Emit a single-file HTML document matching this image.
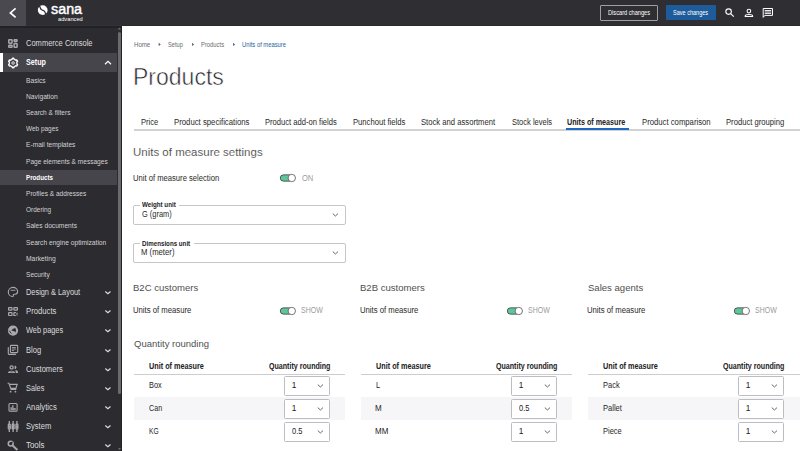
<!DOCTYPE html>
<html><head><meta charset="utf-8"><style>
html,body{margin:0;padding:0;}
body{width:800px;height:451px;overflow:hidden;position:relative;background:#fff;font-family:"Liberation Sans", sans-serif;}
.t{position:absolute;line-height:1;white-space:nowrap;transform-origin:0 0;}
svg{overflow:visible;}
</style></head><body>
<div style="position:absolute;left:0px;top:0px;width:800px;height:25.3px;background:#2f2e33;"></div>
<div style="position:absolute;left:0px;top:0px;width:26px;height:25.8px;background:#4a494f;"></div>
<div style="position:absolute;left:122px;top:25.3px;width:678px;height:0.5px;background:#29282c;"></div>
<svg style="position:absolute;left:0px;top:0px;" width="26" height="26" viewBox="0 0 26 26"><polyline points="15.6,8.4 10.4,12.9 15.6,17.4" fill="none" stroke="#fff" stroke-width="1.7"/></svg>
<svg style="position:absolute;left:0px;top:0px;" width="60" height="26" viewBox="0 0 60 26"><circle cx="42.7" cy="10.1" r="4.9" fill="#fff"/><path d="M39.3,5.6 C40.3,7.2 40.2,8.9 41.6,9.8 C42.6,10.4 43.6,10.4 44.3,11.1 C45.1,11.9 45.2,13 46,14.6" fill="none" stroke="#2f2e33" stroke-width="1.25"/></svg>
<div class="t" style="left:50.77px;top:1.70px;font-size:14.9px;color:#fff;transform:scaleX(0.9619);-webkit-text-stroke:0.45px #fff;">sana</div>
<div class="t" style="left:57.77px;top:15.81px;font-size:6.2px;color:#fff;transform:scaleX(0.9227);">advanced</div>
<div style="position:absolute;left:599.5px;top:5px;width:56.5px;height:13.5px;border:1px solid #a0a0a3;border-radius:1px;"></div>
<div class="t" style="left:608.05px;top:9.50px;font-size:6.27px;color:#fff;transform:scaleX(0.9017);">Discard changes</div>
<div style="position:absolute;left:665.5px;top:5.1px;width:50.6px;height:15.3px;background:#1e5b9a;border-radius:1px;"></div>
<div class="t" style="left:672.55px;top:9.50px;font-size:6.27px;color:#fff;transform:scaleX(0.8830);">Save changes</div>
<svg style="position:absolute;left:700px;top:0px;" width="100" height="26" viewBox="0 0 100 26"><circle cx="28.6" cy="11.6" r="2.75" fill="none" stroke="#fff" stroke-width="1.1"/><line x1="30.6" y1="13.6" x2="33.8" y2="16.6" stroke="#fff" stroke-width="1.2"/><circle cx="48.9" cy="11.1" r="1.85" fill="none" stroke="#fff" stroke-width="1.05"/><path d="M45.1,16.4 C45.2,13.9 52.6,13.9 52.7,16.4 Z" fill="none" stroke="#fff" stroke-width="1.05" stroke-linejoin="round"/><path d="M63.2,8.5 L72.5,8.5 L72.5,15.4 L64.8,15.4 L63.2,17.4 Z" fill="none" stroke="#fff" stroke-width="1" stroke-linejoin="round"/><rect x="64.7" y="10.1" width="6.4" height="0.9" fill="#fff"/><rect x="64.7" y="13.1" width="6.4" height="0.9" fill="#fff"/><rect x="64.7" y="11" width="6.4" height="2.1" fill="#8a8a8c"/></svg>
<div style="position:absolute;left:0px;top:25.8px;width:122.2px;height:425.2px;background:#2c2b30;"></div>
<div style="position:absolute;left:0px;top:25.8px;width:122.2px;height:2.2px;background:#222125;"></div>
<div style="position:absolute;left:26px;top:25.3px;width:96px;height:0.5px;background:#333237;"></div>
<div style="position:absolute;left:121.3px;top:25.8px;width:0.9px;height:425.2px;background:#222125;"></div>
<div style="position:absolute;left:117.8px;top:31.7px;width:3.5px;height:362.6px;background:#6b6a6e;border-radius:1.75px;"></div>
<svg style="position:absolute;left:117px;top:27.3px;" width="5" height="4" viewBox="0 0 5 4"><path d="M0.8,2.6 L2.45,0.4 L4.1,2.6 Z" fill="#6b6a6e"/></svg>
<svg style="position:absolute;left:117px;top:447px;" width="5" height="4" viewBox="0 0 5 4"><path d="M1,1 L2.5,3 L4,1 Z" fill="#6b6a6e"/></svg>
<div style="position:absolute;left:0px;top:52.8px;width:116.9px;height:19.4px;background:#46454b;"></div>
<div style="position:absolute;left:0px;top:53px;width:2.8px;height:19.2px;background:#ffffff;"></div>
<div style="position:absolute;left:0px;top:169.8px;width:116.9px;height:15.3px;background:#46454b;"></div>
<div class="t" style="left:26.12px;top:39.00px;font-size:8.36px;color:#dcdcde;transform:scaleX(0.9018);">Commerce Console</div>
<div class="t" style="left:26.29px;top:57.60px;font-size:8.36px;color:#ffffff;font-weight:bold;transform:scaleX(0.8570);">Setup</div>
<svg style="position:absolute;left:102px;top:58px;" width="12" height="10" viewBox="0 0 12 10"><polyline points="3,6.2 6,3.4 9,6.2" fill="none" stroke="#fff" stroke-width="1.2"/></svg>
<div class="t" style="left:25.97px;top:76.72px;font-size:7.315px;color:#d2d2d4;transform:scaleX(0.9123);">Basics</div>
<div class="t" style="left:25.96px;top:92.89px;font-size:7.315px;color:#d2d2d4;transform:scaleX(0.9190);">Navigation</div>
<div class="t" style="left:25.94px;top:109.06px;font-size:7.315px;color:#d2d2d4;transform:scaleX(0.8976);">Search &amp; filters</div>
<div class="t" style="left:26.14px;top:125.24px;font-size:7.315px;color:#d2d2d4;transform:scaleX(0.8818);">Web pages</div>
<div class="t" style="left:25.97px;top:141.43px;font-size:7.315px;color:#d2d2d4;transform:scaleX(0.9091);">E-mail templates</div>
<div class="t" style="left:25.97px;top:157.60px;font-size:7.315px;color:#d2d2d4;transform:scaleX(0.8991);">Page elements &amp; messages</div>
<div class="t" style="left:25.89px;top:173.79px;font-size:7.315px;color:#ffffff;font-weight:bold;transform:scaleX(0.8521);">Products</div>
<div class="t" style="left:25.97px;top:189.96px;font-size:7.315px;color:#d2d2d4;transform:scaleX(0.9011);">Profiles &amp; addresses</div>
<div class="t" style="left:26.04px;top:206.15px;font-size:7.315px;color:#d2d2d4;transform:scaleX(0.8862);">Ordering</div>
<div class="t" style="left:25.93px;top:222.32px;font-size:7.315px;color:#d2d2d4;transform:scaleX(0.9103);">Sales documents</div>
<div class="t" style="left:25.93px;top:238.51px;font-size:7.315px;color:#d2d2d4;transform:scaleX(0.9118);">Search engine optimization</div>
<div class="t" style="left:25.96px;top:254.68px;font-size:7.315px;color:#d2d2d4;transform:scaleX(0.9252);">Marketing</div>
<div class="t" style="left:25.94px;top:270.87px;font-size:7.315px;color:#d2d2d4;transform:scaleX(0.9002);">Security</div>
<div class="t" style="left:26.11px;top:288.20px;font-size:8.36px;color:#dcdcde;transform:scaleX(0.8846);">Design &amp; Layout</div>
<svg style="position:absolute;left:100px;top:285.2px;" width="14" height="12" viewBox="0 0 14 12"><polyline points="5.3,6.5 7.9,8.7 10.5,6.5" fill="none" stroke="#dcdcde" stroke-width="1.2"/></svg>
<div class="t" style="left:26.08px;top:307.33px;font-size:8.36px;color:#dcdcde;transform:scaleX(0.9221);">Products</div>
<svg style="position:absolute;left:100px;top:304.325px;" width="14" height="12" viewBox="0 0 14 12"><polyline points="5.3,6.5 7.9,8.7 10.5,6.5" fill="none" stroke="#dcdcde" stroke-width="1.2"/></svg>
<div class="t" style="left:26.28px;top:326.45px;font-size:8.36px;color:#dcdcde;transform:scaleX(0.8818);">Web pages</div>
<svg style="position:absolute;left:100px;top:323.45px;" width="14" height="12" viewBox="0 0 14 12"><polyline points="5.3,6.5 7.9,8.7 10.5,6.5" fill="none" stroke="#dcdcde" stroke-width="1.2"/></svg>
<div class="t" style="left:26.09px;top:345.58px;font-size:8.36px;color:#dcdcde;transform:scaleX(0.9066);">Blog</div>
<svg style="position:absolute;left:100px;top:342.575px;" width="14" height="12" viewBox="0 0 14 12"><polyline points="5.3,6.5 7.9,8.7 10.5,6.5" fill="none" stroke="#dcdcde" stroke-width="1.2"/></svg>
<div class="t" style="left:26.17px;top:364.70px;font-size:8.36px;color:#dcdcde;transform:scaleX(0.9110);">Customers</div>
<svg style="position:absolute;left:100px;top:361.7px;" width="14" height="12" viewBox="0 0 14 12"><polyline points="5.3,6.5 7.9,8.7 10.5,6.5" fill="none" stroke="#dcdcde" stroke-width="1.2"/></svg>
<div class="t" style="left:26.07px;top:383.83px;font-size:8.36px;color:#dcdcde;transform:scaleX(0.8790);">Sales</div>
<svg style="position:absolute;left:100px;top:380.825px;" width="14" height="12" viewBox="0 0 14 12"><polyline points="5.3,6.5 7.9,8.7 10.5,6.5" fill="none" stroke="#dcdcde" stroke-width="1.2"/></svg>
<div class="t" style="left:26.21px;top:402.95px;font-size:8.36px;color:#dcdcde;transform:scaleX(0.9206);">Analytics</div>
<svg style="position:absolute;left:100px;top:399.95px;" width="14" height="12" viewBox="0 0 14 12"><polyline points="5.3,6.5 7.9,8.7 10.5,6.5" fill="none" stroke="#dcdcde" stroke-width="1.2"/></svg>
<div class="t" style="left:26.06px;top:422.08px;font-size:8.36px;color:#dcdcde;transform:scaleX(0.9049);">System</div>
<svg style="position:absolute;left:100px;top:419.075px;" width="14" height="12" viewBox="0 0 14 12"><polyline points="5.3,6.5 7.9,8.7 10.5,6.5" fill="none" stroke="#dcdcde" stroke-width="1.2"/></svg>
<div class="t" style="left:26.12px;top:441.20px;font-size:8.36px;color:#dcdcde;transform:scaleX(0.9470);">Tools</div>
<svg style="position:absolute;left:100px;top:438.2px;" width="14" height="12" viewBox="0 0 14 12"><polyline points="5.3,6.5 7.9,8.7 10.5,6.5" fill="none" stroke="#dcdcde" stroke-width="1.2"/></svg>
<svg style="position:absolute;left:0px;top:0px;" width="122" height="451" viewBox="0 0 122 451"><g fill="none" stroke="#a9a9ad" stroke-width="1.5"><rect x="8.75" y="39.75" width="3.3" height="3.4" rx=".6"/><rect x="14.1" y="39.75" width="2.95" height="1.7" rx=".6"/><rect x="8.75" y="45.35" width="3.3" height="2" rx=".6"/><rect x="14.1" y="43.55" width="2.95" height="3.8" rx=".6"/></g><polygon points="13.10,58.25 13.51,58.27 13.92,58.32 14.08,59.33 14.40,59.43 14.71,59.56 15.00,59.71 15.28,59.89 15.54,60.09 15.79,60.31 16.74,59.95 16.99,60.28 17.21,60.62 17.40,60.99 17.56,61.38 16.77,62.02 16.84,62.34 16.89,62.67 16.90,63.00 16.89,63.33 16.84,63.66 16.77,63.98 17.56,64.62 17.40,65.01 17.21,65.38 16.99,65.72 16.74,66.05 15.79,65.69 15.54,65.91 15.28,66.11 15.00,66.29 14.71,66.44 14.40,66.57 14.08,66.67 13.92,67.68 13.51,67.73 13.10,67.75 12.69,67.73 12.28,67.68 12.12,66.67 11.80,66.57 11.49,66.44 11.20,66.29 10.92,66.11 10.66,65.91 10.41,65.69 9.46,66.05 9.21,65.72 8.99,65.38 8.80,65.01 8.64,64.62 9.43,63.98 9.36,63.66 9.31,63.33 9.30,63.00 9.31,62.67 9.36,62.34 9.43,62.02 8.64,61.38 8.80,60.99 8.99,60.62 9.21,60.28 9.46,59.95 10.41,60.31 10.66,60.09 10.92,59.89 11.20,59.71 11.49,59.56 11.80,59.43 12.12,59.33 12.28,58.32 12.69,58.27" fill="none" stroke="#fff" stroke-width="1.3" stroke-linejoin="round"/><circle cx="13.1" cy="63" r="1.25" fill="none" stroke="#f0f0f0" stroke-width="0.9"/><path d="M13,287.4 C10.2,287.4 8.3,289.5 8.3,292 C8.3,294.6 10.3,296.5 12.6,296.5 C13.3,296.5 13.6,296.1 13.4,295.5 C13.1,294.8 13.4,294.2 14.2,294.2 L15,294.2 C16.6,294.2 17.6,293 17.6,291.5 C17.6,289.2 15.6,287.4 13,287.4 Z" fill="none" stroke="#a9a9ad" stroke-width="1.1"/><rect x="10.6" y="289.8" width="4.8" height="0.9" fill="#a9a9ad"/><g fill="none" stroke="#a9a9ad" stroke-width="1.2"><rect x="8.6" y="307.6" width="3.4" height="2.6" rx=".4"/><rect x="13.9" y="307.6" width="3.5" height="2.6" rx=".4"/><rect x="8.6" y="312.6" width="3.4" height="2.9" rx=".4"/><path d="M13.9,312.6 h2 M13.9,312.6 v2.9 h2 M16.4,313.3 h1.2 M16.4,314.8 h1.2"/></g><circle cx="13" cy="330.6" r="5.1" fill="#a9a9ad"/><path d="M11.3,330.6 C12.2,329.4 13.4,328.6 14.6,328.3 L15.8,328.4 C16.1,329.6 15.9,331 15.6,332.6 C15.1,331.7 14.4,331.1 13.4,331 C12.6,330.9 12,330.8 11.3,330.6 Z" fill="#2c2b30"/><path d="M9.1,330.5 C9.7,331.5 10.4,332.3 11.4,333.6" fill="none" stroke="#2c2b30" stroke-width="0.9"/><rect x="10.4" y="345.4" width="7.3" height="7.2" rx=".9" fill="none" stroke="#a9a9ad" stroke-width="1.1"/><path d="M8.3,347.2 v6.6 q0,.6 .6,.6 h7" fill="none" stroke="#a9a9ad" stroke-width="1.1"/><rect x="11.9" y="347.2" width="4" height="0.9" fill="#a9a9ad"/><rect x="11.9" y="348.1" width="4" height="2" fill="#66656a"/><rect x="11.9" y="350.1" width="2" height="0.9" fill="#a9a9ad"/><circle cx="11.6" cy="367.4" r="1.55" fill="none" stroke="#a9a9ad" stroke-width="1.3"/><path d="M14.6,365.6 A1.8,1.8 0 0 1 14.6,369.2 Z" fill="#a9a9ad"/><path d="M7.9,372.9 C8.2,369.9 14.9,369.9 15.2,372.9 Z" fill="#a9a9ad"/><path d="M9.6,372.3 C10.4,371 12.8,371 13.6,372.3 Z" fill="#5a595e"/><path d="M15.4,370.1 C17,370.3 18,371.3 18.1,372.9 h-2.3 Z" fill="#a9a9ad"/><path d="M7.6,383.2 h1.3 l2.2,6.2 h5.2" fill="none" stroke="#a9a9ad" stroke-width="1.1"/><path d="M10,384.4 h7.2 l-1.3,4 h-5" fill="none" stroke="#a9a9ad" stroke-width="1.1"/><circle cx="10.6" cy="391.7" r=".9" fill="#a9a9ad"/><circle cx="15.4" cy="391.7" r=".9" fill="#a9a9ad"/><rect x="9" y="403.5" width="8.1" height="7.7" rx="1" fill="none" stroke="#a9a9ad" stroke-width="1.1"/><path d="M10.4,410.5 v-3.2 h1.6 v-2 h1.6 v2.8 h2.2 v2.4 Z" fill="#8f8f93"/><g stroke="#a9a9ad" stroke-width="1.3"><path d="M9.3,420.9 v11.1 M13.1,420.9 v11.1 M16.9,420.9 v11.1"/></g><g fill="#a9a9ad"><rect x="7.7" y="423.6" width="3.2" height="5.8" rx="1.2"/><rect x="11.5" y="423.6" width="3.2" height="5.8" rx="1.2"/><rect x="15.3" y="423.6" width="3.2" height="5.8" rx="1.2"/></g><g fill="#6a696e"><circle cx="9.3" cy="425.2" r=".5"/><circle cx="16.9" cy="425.2" r=".5"/><circle cx="9.3" cy="427.9" r=".5"/><circle cx="16.9" cy="427.9" r=".5"/></g><circle cx="10.7" cy="443.6" r="2.45" fill="none" stroke="#a9a9ad" stroke-width="1.5"/><path d="M10.9,443.4 L12.6,441.6" stroke="#2c2b30" stroke-width="1.1"/><path d="M12.6,445.6 L17.4,450" stroke="#a9a9ad" stroke-width="2.1"/></svg>
<div class="t" style="left:133.71px;top:42.00px;font-size:6.27px;color:#6a6a6a;transform:scaleX(0.9714);">Home</div>
<div class="t" style="left:167.84px;top:42.00px;font-size:6.27px;color:#6a6a6a;transform:scaleX(0.9096);">Setup</div>
<div class="t" style="left:200.63px;top:42.00px;font-size:6.27px;color:#6a6a6a;transform:scaleX(0.9328);">Products</div>
<div class="t" style="left:241.86px;top:42.00px;font-size:6.27px;color:#1f5f9f;transform:scaleX(0.9297);">Units of measure</div>
<svg style="position:absolute;left:120px;top:0px;" width="160" height="60" viewBox="0 0 160 60"><path d="M38.7,42.7 L40.7,44.4 L38.7,46.1 Z" fill="#555"/><path d="M72.1,42.7 L74.1,44.4 L72.1,46.1 Z" fill="#555"/><path d="M113.1,42.7 L115.1,44.4 L113.1,46.1 Z" fill="#1f5f9f"/></svg>
<div class="t" style="left:133.16px;top:66.01px;font-size:23.484px;color:#222;transform:scaleX(0.9806);-webkit-text-stroke:0.55px #fff;">Products</div>
<div style="position:absolute;left:134px;top:129.3px;width:666px;height:1.9px;background:#d2d2d4;"></div>
<div class="t" style="left:140.89px;top:117.60px;font-size:8.36px;color:#2a2a2a;transform:scaleX(0.9070);">Price</div>
<div class="t" style="left:173.78px;top:117.60px;font-size:8.36px;color:#2a2a2a;transform:scaleX(0.9294);">Product specifications</div>
<div class="t" style="left:265.19px;top:117.60px;font-size:8.36px;color:#2a2a2a;transform:scaleX(0.9101);">Product add-on fields</div>
<div class="t" style="left:353.14px;top:117.60px;font-size:8.36px;color:#2a2a2a;transform:scaleX(0.9172);">Punchout fields</div>
<div class="t" style="left:421.15px;top:117.60px;font-size:8.36px;color:#2a2a2a;transform:scaleX(0.9185);">Stock and assortment</div>
<div class="t" style="left:511.66px;top:117.60px;font-size:8.36px;color:#2a2a2a;transform:scaleX(0.9013);">Stock levels</div>
<div class="t" style="left:567.47px;top:117.60px;font-size:8.36px;color:#222;font-weight:bold;transform:scaleX(0.8603);">Units of measure</div>
<div class="t" style="left:641.68px;top:117.60px;font-size:8.36px;color:#2a2a2a;transform:scaleX(0.9247);">Product comparison</div>
<div class="t" style="left:726.09px;top:117.60px;font-size:8.36px;color:#2a2a2a;transform:scaleX(0.9164);">Product grouping</div>
<div style="position:absolute;left:566px;top:128px;width:62.5px;height:2px;background:#1f6ac0;"></div>
<div class="t" style="left:132.89px;top:147.00px;font-size:11.4px;color:#4c4c4c;transform:scaleX(1.0087);-webkit-text-stroke:0.08px #fff;">Units of measure settings</div>
<div class="t" style="left:133.18px;top:173.75px;font-size:8.36px;color:#2a2a2a;transform:scaleX(0.9152);">Unit of measure selection</div>
<svg style="position:absolute;left:278px;top:172.2px;" width="22" height="12" viewBox="0 0 22 12"><rect x="2.3" y="2.85" width="12" height="6.3" rx="3.15" fill="#5fc59b" stroke="#3e3e3e" stroke-width="0.8"/><circle cx="13.8" cy="6" r="3.7" fill="#fff" stroke="#555" stroke-width="0.8"/></svg>
<div class="t" style="left:301.86px;top:173.75px;font-size:8.36px;color:#9b9b9b;transform:scaleX(0.9047);">ON</div>
<div style="position:absolute;left:133px;top:205px;width:211px;height:18px;border:1px solid #c6c6ca;border-radius:2px;"></div>
<div style="position:absolute;left:139.5px;top:204px;width:39px;height:3px;background:#fff;"></div>
<div class="t" style="left:142.00px;top:201.47px;font-size:7.315px;color:#222;font-weight:bold;transform:scaleX(0.8528);">Weight unit</div>
<div class="t" style="left:141.63px;top:209.75px;font-size:8.36px;color:#2a2a2a;transform:scaleX(0.8880);">G (gram)</div>
<svg style="position:absolute;left:331px;top:211.5px;" width="8" height="6" viewBox="0 0 8 6"><polyline points="1.8,1.6 4.4,4 7,1.6" fill="none" stroke="#555" stroke-width="0.9"/></svg>
<div style="position:absolute;left:133px;top:243.2px;width:211px;height:18px;border:1px solid #c6c6ca;border-radius:2px;"></div>
<div style="position:absolute;left:139.5px;top:242.2px;width:54px;height:3px;background:#fff;"></div>
<div class="t" style="left:141.60px;top:239.66px;font-size:7.315px;color:#222;font-weight:bold;transform:scaleX(0.8489);">Dimensions unit</div>
<div class="t" style="left:141.38px;top:247.96px;font-size:8.36px;color:#2a2a2a;transform:scaleX(0.9254);">M (meter)</div>
<svg style="position:absolute;left:331px;top:249.7px;" width="8" height="6" viewBox="0 0 8 6"><polyline points="1.8,1.6 4.4,4 7,1.6" fill="none" stroke="#555" stroke-width="0.9"/></svg>
<div class="t" style="left:133.24px;top:282.80px;font-size:9.975px;color:#505050;transform:scaleX(0.9578);">B2C customers</div>
<div class="t" style="left:133.42px;top:306.00px;font-size:8.36px;color:#2a2a2a;transform:scaleX(0.9254);">Units of measure</div>
<svg style="position:absolute;left:278px;top:304.5px;" width="22" height="12" viewBox="0 0 22 12"><rect x="2.3" y="2.85" width="12" height="6.3" rx="3.15" fill="#5fc59b" stroke="#3e3e3e" stroke-width="0.8"/><circle cx="13.8" cy="6" r="3.7" fill="#fff" stroke="#555" stroke-width="0.8"/></svg>
<div class="t" style="left:301.48px;top:306.10px;font-size:8.36px;color:#9b9b9b;transform:scaleX(0.8378);">SHOW</div>
<div class="t" style="left:133.57px;top:338.80px;font-size:9.975px;color:#505050;transform:scaleX(0.9529);">Quantity rounding</div>
<div class="t" style="left:148.76px;top:361.91px;font-size:8.36px;color:#222;font-weight:bold;transform:scaleX(0.8701);">Unit of measure</div>
<div class="t" style="left:268.72px;top:361.90px;font-size:8.36px;color:#222;font-weight:bold;transform:scaleX(0.8496);">Quantity rounding</div>
<div style="position:absolute;left:134px;top:373.5px;width:211px;height:1.6px;background:#cdcdd0;"></div>
<div style="position:absolute;left:134px;top:397.2px;width:211px;height:22.8px;background:#f6f6f8;"></div>
<div class="t" style="left:148.51px;top:381.22px;font-size:8.36px;color:#262626;transform:scaleX(0.8785);">Box</div>
<div style="position:absolute;left:284.3px;top:376.3px;width:43.3px;height:17.4px;border:1px solid #bdbdc1;border-radius:1.5px;background:#fff;"></div>
<div class="t" style="left:291.77px;top:381.21px;font-size:8.36px;color:#222;transform:scaleX(1.0000);">1</div>
<svg style="position:absolute;left:316px;top:382.8px;" width="8" height="6" viewBox="0 0 8 6"><polyline points="1.8,1.6 4.4,4 7,1.6" fill="none" stroke="#555" stroke-width="0.9"/></svg>
<div class="t" style="left:148.59px;top:404.22px;font-size:8.36px;color:#262626;transform:scaleX(0.8562);">Can</div>
<div style="position:absolute;left:284.3px;top:399.35px;width:43.3px;height:17.4px;border:1px solid #bdbdc1;border-radius:1.5px;background:#fff;"></div>
<div class="t" style="left:291.77px;top:404.21px;font-size:8.36px;color:#222;transform:scaleX(1.0000);">1</div>
<svg style="position:absolute;left:316px;top:405.85px;" width="8" height="6" viewBox="0 0 8 6"><polyline points="1.8,1.6 4.4,4 7,1.6" fill="none" stroke="#555" stroke-width="0.9"/></svg>
<div class="t" style="left:148.56px;top:427.22px;font-size:8.36px;color:#262626;transform:scaleX(0.8034);">KG</div>
<div style="position:absolute;left:284.3px;top:422.40000000000003px;width:43.3px;height:17.4px;border:1px solid #bdbdc1;border-radius:1.5px;background:#fff;"></div>
<div class="t" style="left:291.60px;top:427.21px;font-size:8.36px;color:#222;transform:scaleX(0.8987);">0.5</div>
<svg style="position:absolute;left:316px;top:428.90000000000003px;" width="8" height="6" viewBox="0 0 8 6"><polyline points="1.8,1.6 4.4,4 7,1.6" fill="none" stroke="#555" stroke-width="0.9"/></svg>
<div class="t" style="left:360.24px;top:282.80px;font-size:9.975px;color:#505050;transform:scaleX(0.9578);">B2B customers</div>
<div class="t" style="left:360.42px;top:306.00px;font-size:8.36px;color:#2a2a2a;transform:scaleX(0.9254);">Units of measure</div>
<svg style="position:absolute;left:505px;top:304.5px;" width="22" height="12" viewBox="0 0 22 12"><rect x="2.3" y="2.85" width="12" height="6.3" rx="3.15" fill="#5fc59b" stroke="#3e3e3e" stroke-width="0.8"/><circle cx="13.8" cy="6" r="3.7" fill="#fff" stroke="#555" stroke-width="0.8"/></svg>
<div class="t" style="left:528.48px;top:306.10px;font-size:8.36px;color:#9b9b9b;transform:scaleX(0.8378);">SHOW</div>
<div class="t" style="left:375.76px;top:361.91px;font-size:8.36px;color:#222;font-weight:bold;transform:scaleX(0.8701);">Unit of measure</div>
<div class="t" style="left:495.72px;top:361.90px;font-size:8.36px;color:#222;font-weight:bold;transform:scaleX(0.8496);">Quantity rounding</div>
<div style="position:absolute;left:361px;top:373.5px;width:211px;height:1.6px;background:#cdcdd0;"></div>
<div style="position:absolute;left:361px;top:397.2px;width:211px;height:22.8px;background:#f6f6f8;"></div>
<div class="t" style="left:375.51px;top:381.22px;font-size:8.36px;color:#262626;transform:scaleX(0.8887);">L</div>
<div style="position:absolute;left:511.3px;top:376.3px;width:43.3px;height:17.4px;border:1px solid #bdbdc1;border-radius:1.5px;background:#fff;"></div>
<div class="t" style="left:518.77px;top:381.21px;font-size:8.36px;color:#222;transform:scaleX(1.0000);">1</div>
<svg style="position:absolute;left:543px;top:382.8px;" width="8" height="6" viewBox="0 0 8 6"><polyline points="1.8,1.6 4.4,4 7,1.6" fill="none" stroke="#555" stroke-width="0.9"/></svg>
<div class="t" style="left:375.46px;top:404.22px;font-size:8.36px;color:#262626;transform:scaleX(0.9634);">M</div>
<div style="position:absolute;left:511.3px;top:399.35px;width:43.3px;height:17.4px;border:1px solid #bdbdc1;border-radius:1.5px;background:#fff;"></div>
<div class="t" style="left:518.60px;top:404.21px;font-size:8.36px;color:#222;transform:scaleX(0.8987);">0.5</div>
<svg style="position:absolute;left:543px;top:405.85px;" width="8" height="6" viewBox="0 0 8 6"><polyline points="1.8,1.6 4.4,4 7,1.6" fill="none" stroke="#555" stroke-width="0.9"/></svg>
<div class="t" style="left:375.46px;top:427.22px;font-size:8.36px;color:#262626;transform:scaleX(0.9574);">MM</div>
<div style="position:absolute;left:511.3px;top:422.40000000000003px;width:43.3px;height:17.4px;border:1px solid #bdbdc1;border-radius:1.5px;background:#fff;"></div>
<div class="t" style="left:518.77px;top:427.21px;font-size:8.36px;color:#222;transform:scaleX(1.0000);">1</div>
<svg style="position:absolute;left:543px;top:428.90000000000003px;" width="8" height="6" viewBox="0 0 8 6"><polyline points="1.8,1.6 4.4,4 7,1.6" fill="none" stroke="#555" stroke-width="0.9"/></svg>
<div class="t" style="left:587.57px;top:282.80px;font-size:9.975px;color:#505050;transform:scaleX(0.9578);">Sales agents</div>
<div class="t" style="left:587.42px;top:306.00px;font-size:8.36px;color:#2a2a2a;transform:scaleX(0.9254);">Units of measure</div>
<svg style="position:absolute;left:732px;top:304.5px;" width="22" height="12" viewBox="0 0 22 12"><rect x="2.3" y="2.85" width="12" height="6.3" rx="3.15" fill="#5fc59b" stroke="#3e3e3e" stroke-width="0.8"/><circle cx="13.8" cy="6" r="3.7" fill="#fff" stroke="#555" stroke-width="0.8"/></svg>
<div class="t" style="left:755.48px;top:306.10px;font-size:8.36px;color:#9b9b9b;transform:scaleX(0.8378);">SHOW</div>
<div class="t" style="left:602.76px;top:361.91px;font-size:8.36px;color:#222;font-weight:bold;transform:scaleX(0.8701);">Unit of measure</div>
<div class="t" style="left:722.72px;top:361.90px;font-size:8.36px;color:#222;font-weight:bold;transform:scaleX(0.8496);">Quantity rounding</div>
<div style="position:absolute;left:588px;top:373.5px;width:212px;height:1.6px;background:#cdcdd0;"></div>
<div style="position:absolute;left:588px;top:397.2px;width:212px;height:22.8px;background:#f6f6f8;"></div>
<div class="t" style="left:602.50px;top:381.22px;font-size:8.36px;color:#262626;transform:scaleX(0.8985);">Pack</div>
<div style="position:absolute;left:738.3px;top:376.3px;width:43.3px;height:17.4px;border:1px solid #bdbdc1;border-radius:1.5px;background:#fff;"></div>
<div class="t" style="left:745.77px;top:381.21px;font-size:8.36px;color:#222;transform:scaleX(1.0000);">1</div>
<svg style="position:absolute;left:770px;top:382.8px;" width="8" height="6" viewBox="0 0 8 6"><polyline points="1.8,1.6 4.4,4 7,1.6" fill="none" stroke="#555" stroke-width="0.9"/></svg>
<div class="t" style="left:602.50px;top:404.22px;font-size:8.36px;color:#262626;transform:scaleX(0.9034);">Pallet</div>
<div style="position:absolute;left:738.3px;top:399.35px;width:43.3px;height:17.4px;border:1px solid #bdbdc1;border-radius:1.5px;background:#fff;"></div>
<div class="t" style="left:745.77px;top:404.21px;font-size:8.36px;color:#222;transform:scaleX(1.0000);">1</div>
<svg style="position:absolute;left:770px;top:405.85px;" width="8" height="6" viewBox="0 0 8 6"><polyline points="1.8,1.6 4.4,4 7,1.6" fill="none" stroke="#555" stroke-width="0.9"/></svg>
<div class="t" style="left:602.50px;top:427.22px;font-size:8.36px;color:#262626;transform:scaleX(0.8957);">Piece</div>
<div style="position:absolute;left:738.3px;top:422.40000000000003px;width:43.3px;height:17.4px;border:1px solid #bdbdc1;border-radius:1.5px;background:#fff;"></div>
<div class="t" style="left:745.77px;top:427.21px;font-size:8.36px;color:#222;transform:scaleX(1.0000);">1</div>
<svg style="position:absolute;left:770px;top:428.90000000000003px;" width="8" height="6" viewBox="0 0 8 6"><polyline points="1.8,1.6 4.4,4 7,1.6" fill="none" stroke="#555" stroke-width="0.9"/></svg>
</body></html>
